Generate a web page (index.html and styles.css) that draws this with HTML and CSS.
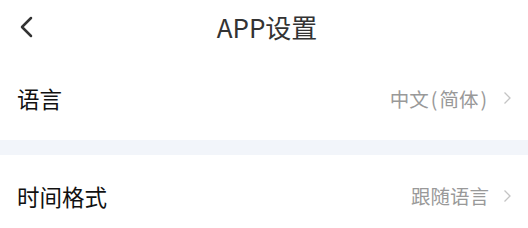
FILE: index.html
```html
<!DOCTYPE html>
<html lang="zh-CN">
<head>
<meta charset="utf-8">
<title>APP设置</title>
<link rel="stylesheet" href="styles.css">
</head>
<body>
<div class="page">
  <header class="nav">
    <span class="back">
      <svg width="16" height="22" viewBox="0 0 16 22"><path d="M13 2 L4 11 L13 20" fill="none" stroke="#333" stroke-width="2.5" stroke-linecap="round" stroke-linejoin="round"/></svg>
    </span>
    <h1 class="title">APP设置</h1>
  </header>
  <div class="row">
    <span class="label">语言</span>
    <span class="value">中文<span class="paren">(</span>简体<span class="paren">)</span><svg class="arrow" width="9" height="14" viewBox="0 0 9 14"><path d="M1.5 1.5 L7 7 L1.5 12.5" fill="none" stroke="#c4c4c4" stroke-width="1.3"/></svg></span>
  </div>
  <div class="gap"></div>
  <div class="row row-last">
    <span class="label">时间格式</span>
    <span class="value">跟随语言<svg class="arrow" width="9" height="14" viewBox="0 0 9 14"><path d="M1.5 1.5 L7 7 L1.5 12.5" fill="none" stroke="#c4c4c4" stroke-width="1.3"/></svg></span>
  </div>
</div>
</body>
</html>
```
FILE: styles.css
```css
html, body {
  margin: 0;
  padding: 0;
  background: #fff;
}
body {
  font-family: "Noto Sans CJK SC", "Noto Sans", sans-serif;
}
.page {
  width: 528px;
}
.nav {
  position: relative;
  height: 56px;
  display: flex;
  align-items: center;
  justify-content: center;
  padding-left: 6px;
}
.back {
  position: absolute;
  left: 18px;
  top: 16px;
  display: flex;
}
.title {
  margin: 0 0 2px;
  font-size: 26px;
  font-weight: 400;
  color: #333;
  line-height: 1;
}
.row {
  height: 84px;
  display: flex;
  align-items: center;
  justify-content: space-between;
  padding: 0 16px 0 17px;
}
.row-last {
  padding-bottom: 3px;
  box-sizing: border-box;
}
.label {
  font-size: 22.5px;
  color: #111;
}
.value {
  display: flex;
  align-items: center;
  font-size: 19.5px;
  color: #999;
}
.paren {
  margin: 0 2px;
}
.arrow {
  margin-left: 14px;
}
.gap {
  height: 15px;
  background: #f2f5fa;
}
```
